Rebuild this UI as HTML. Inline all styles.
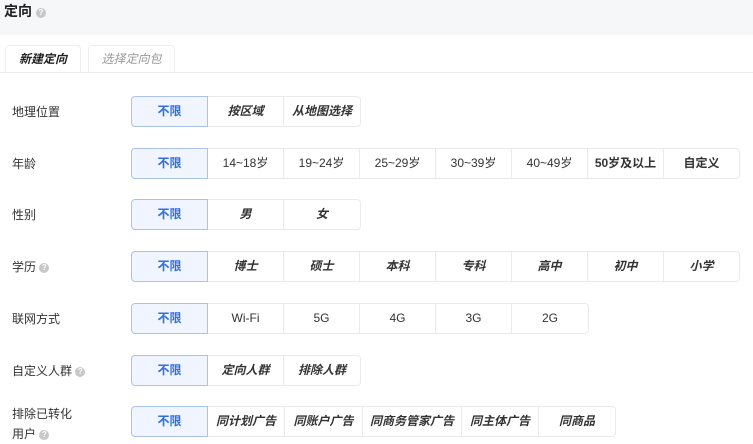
<!DOCTYPE html>
<html><head><meta charset="utf-8"><style>
*{box-sizing:border-box;margin:0;padding:0}
body{width:753px;height:433px;overflow:hidden;background:#fff;font-family:"Liberation Sans","Noto Sans CJK SC",sans-serif;color:#333;position:relative}
.hdr{position:absolute;left:0;top:0;width:753px;height:35px;background:#f6f7f9}
.hdr span{position:absolute;left:4px;top:1px;font-size:14px;font-weight:bold;color:#222}
.q{display:inline-block;width:10px;height:10px;border-radius:50%;background:#c8c8c8;color:#fff;font-size:8px;line-height:10px;text-align:center;vertical-align:1px;font-style:normal;font-weight:bold}
.tab{position:absolute;top:45px;height:28px;border:1px solid #eceef2;border-bottom:none;border-radius:4px 4px 0 0;font-size:12px;line-height:27px;text-align:center;font-style:italic}
.line{position:absolute;left:0;top:72px;width:753px;height:1px;background:#eceef2}
.lbl{position:absolute;left:12px;font-size:12px;color:#333}
.row{position:absolute;left:131px;height:31px;display:flex}
.b{height:31px;border:1px solid #e8eaee;border-left:none;font-size:12px;line-height:29px;text-align:center;font-weight:bold;font-style:italic;color:#333}
.b:last-child{border-radius:0 4px 4px 0}
.b.f{border:1px solid #a9c3ee;background:#f0f5ff;color:#2f6fe0;border-radius:4px 0 0 4px;font-style:normal}
.n{font-weight:normal;font-style:normal}
</style></head><body>
<div class="hdr"><span>定向 <i class="q">?</i></span></div>
<div class="tab" style="left:5px;width:76px;font-weight:bold;color:#222;background:#fff">新建定向</div>
<div class="tab" style="left:88px;width:87px;color:#999">选择定向包</div>
<div class="line"></div>

<div class="lbl" style="top:103px">地理位置</div>
<div class="row" style="top:96px"><div class="b f" style="width:77px">不限</div><div class="b" style="width:76px">按区域</div><div class="b" style="width:77px">从地图选择</div></div>

<div class="lbl" style="top:155px">年龄</div>
<div class="row" style="top:148px"><div class="b f" style="width:77px">不限</div><div class="b n" style="width:76px">14~18岁</div><div class="b n" style="width:76px">19~24岁</div><div class="b n" style="width:76px">25~29岁</div><div class="b n" style="width:76px">30~39岁</div><div class="b n" style="width:76px">40~49岁</div><div class="b n" style="width:76px;font-weight:bold">50岁及以上</div><div class="b n" style="width:76px;font-weight:bold">自定义</div></div>

<div class="lbl" style="top:206px">性别</div>
<div class="row" style="top:199px"><div class="b f" style="width:77px">不限</div><div class="b" style="width:76px">男</div><div class="b" style="width:77px">女</div></div>

<div class="lbl" style="top:258px">学历 <i class="q">?</i></div>
<div class="row" style="top:251px"><div class="b f" style="width:77px">不限</div><div class="b" style="width:76px">博士</div><div class="b" style="width:76px">硕士</div><div class="b" style="width:76px">本科</div><div class="b" style="width:76px">专科</div><div class="b" style="width:76px">高中</div><div class="b" style="width:76px">初中</div><div class="b" style="width:76px">小学</div></div>

<div class="lbl" style="top:310px">联网方式</div>
<div class="row" style="top:303px"><div class="b f" style="width:77px">不限</div><div class="b n" style="width:76px">Wi-Fi</div><div class="b n" style="width:76px">5G</div><div class="b n" style="width:76px">4G</div><div class="b n" style="width:76px">3G</div><div class="b n" style="width:77px">2G</div></div>

<div class="lbl" style="top:362px">自定义人群 <i class="q">?</i></div>
<div class="row" style="top:355px"><div class="b f" style="width:77px">不限</div><div class="b" style="width:76px">定向人群</div><div class="b" style="width:77px">排除人群</div></div>

<div class="lbl" style="top:404px;line-height:20px">排除已转化<br>用户 <i class="q">?</i></div>
<div class="row" style="top:406px"><div class="b f" style="width:77px">不限</div><div class="b" style="width:77px">同计划广告</div><div class="b" style="width:78px">同账户广告</div><div class="b" style="width:99px">同商务管家广告</div><div class="b" style="width:77px">同主体广告</div><div class="b" style="width:77px">同商品</div></div>
</body></html>
